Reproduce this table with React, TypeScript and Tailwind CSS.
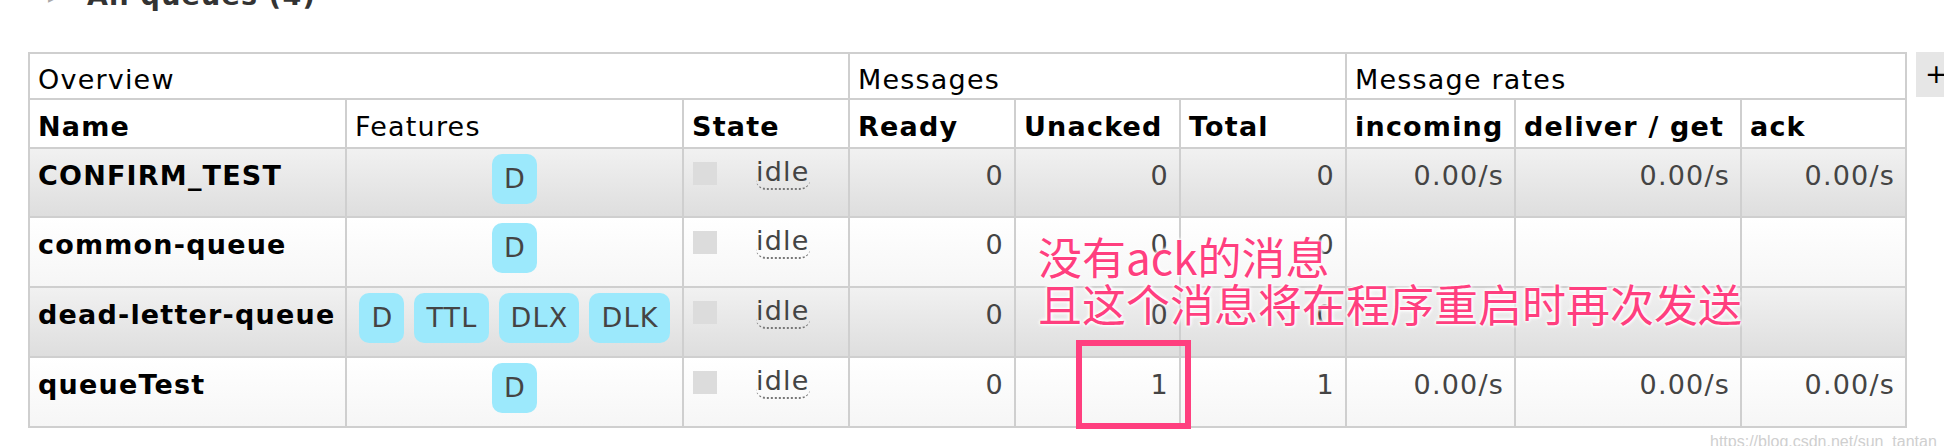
import React from "react";

type Row = {
  name: string;
  features: string[];
  ready: string;
  unacked: string;
  total: string;
  incoming: string;
  deliver: string;
  ack: string;
  odd: boolean;
};

const rows: Row[] = [
  { name: "CONFIRM_TEST", features: ["D"], ready: "0", unacked: "0", total: "0", incoming: "0.00/s", deliver: "0.00/s", ack: "0.00/s", odd: true },
  { name: "common-queue", features: ["D"], ready: "0", unacked: "0", total: "0", incoming: "", deliver: "", ack: "", odd: false },
  { name: "dead-letter-queue", features: ["D", "TTL", "DLX", "DLK"], ready: "0", unacked: "0", total: "0", incoming: "", deliver: "", ack: "", odd: true },
  { name: "queueTest", features: ["D"], ready: "0", unacked: "1", total: "1", incoming: "0.00/s", deliver: "0.00/s", ack: "0.00/s", odd: false },
];

function Num({ v, bg }: { v: string; bg: string }) {
  return (
    <div className={`${bg} pt-[7px] pr-[10px] text-right text-[#444]`}>{v}</div>
  );
}

export default function App() {
  const groupCell = "bg-white pl-[8px] pt-[6px] text-black";
  const headCell = "bg-white pl-[8px] pt-[7px] text-black";
  return (
    <div className="relative w-[1944px] h-[446px] overflow-hidden bg-white font-['DejaVu_Sans',sans-serif] text-[27px] tracking-[1.2px]">
      {/* title */}
      <div className="flex items-start h-[52px]">
        <div className="-mt-[24px] flex items-center">
          <span className="ml-[48px] w-[39px] text-[18px] text-[#aaa]">▸</span>
          <span className="font-bold text-[#333]">All queues (4)</span>
        </div>
      </div>

      <div className="flex items-start">
        <div className="ml-[28px] grid grid-cols-[315px_335px_164px_164px_163px_164px_167px_224px_163px] grid-rows-[44px_47px_67px_68px_68px_68px] gap-[2px] p-[2px] bg-[#cfcfcf]">
          {/* group header */}
          <div className={`${groupCell} col-span-3`}>Overview</div>
          <div className={`${groupCell} col-span-3`}>Messages</div>
          <div className={`${groupCell} col-span-3`}>Message rates</div>

          {/* column header */}
          <div className={`${headCell} font-bold`}>Name</div>
          <div className={headCell}>Features</div>
          <div className={`${headCell} font-bold`}>State</div>
          <div className={`${headCell} font-bold`}>Ready</div>
          <div className={`${headCell} font-bold`}>Unacked</div>
          <div className={`${headCell} font-bold`}>Total</div>
          <div className={`${headCell} font-bold`}>incoming</div>
          <div className={`${headCell} font-bold`}>deliver / get</div>
          <div className={`${headCell} font-bold`}>ack</div>

          {rows.map((r) => {
            const bg = r.odd
              ? "bg-gradient-to-b from-[#f1f1f1] to-[#dedede]"
              : "bg-gradient-to-b from-[#ffffff] to-[#f6f6f6]";
            return (
              <React.Fragment key={r.name}>
                <div className={`${bg} pl-[8px] pt-[7px] font-bold text-black whitespace-nowrap`}>{r.name}</div>
                <div className={`${bg} flex items-start justify-center gap-[10px] pt-[5px]`}>
                  {r.features.map((f) => (
                    <span
                      key={f}
                      className="flex h-[50px] items-center rounded-[10px] bg-[#9ce9fc] pl-[12px] pr-[11px] text-[#444]"
                    >
                      {f}
                    </span>
                  ))}
                </div>
                <div className={`${bg} flex items-start pl-[9px] pt-[7px]`}>
                  <span className="mt-[6px] h-[23px] w-[24px] bg-[#dcdcdc]" />
                  <span className="ml-[39px] rounded-b-[10px] border-b-2 border-dotted border-[#777] text-[#444] leading-[32px]">
                    idle
                  </span>
                </div>
                <Num v={r.ready} bg={bg} />
                <Num v={r.unacked} bg={bg} />
                <Num v={r.total} bg={bg} />
                <Num v={r.incoming} bg={bg} />
                <Num v={r.deliver} bg={bg} />
                <Num v={r.ack} bg={bg} />
              </React.Fragment>
            );
          })}
        </div>

        <div className="ml-[9px] flex h-[45px] w-[40px] items-center bg-[#e6e6e6] pl-[9px] text-black">
          +
        </div>
      </div>

      {/* annotation */}
      <div className="absolute left-[1038px] top-[233px] font-['Noto_Sans_CJK_SC',sans-serif] text-[44px] leading-[47px] tracking-normal text-[#ff3f7f] [text-shadow:0_0_3px_#fff,0_0_3px_#fff,0_0_4px_#fff,0_0_4px_#fff]">
        <div>没有ack的消息</div>
        <div>且这个消息将在程序重启时再次发送</div>
      </div>
      <div className="absolute left-[1076px] top-[340px] h-[89px] w-[115px] border-[6px] border-[#ff3f7f]" />

      {/* watermark */}
      <div className="absolute left-[1710px] top-[430px] font-['Liberation_Sans',sans-serif] text-[16px] tracking-normal text-[#cfcfcf]">
        https://blog.csdn.net/sun_tantan
      </div>
    </div>
  );
}
